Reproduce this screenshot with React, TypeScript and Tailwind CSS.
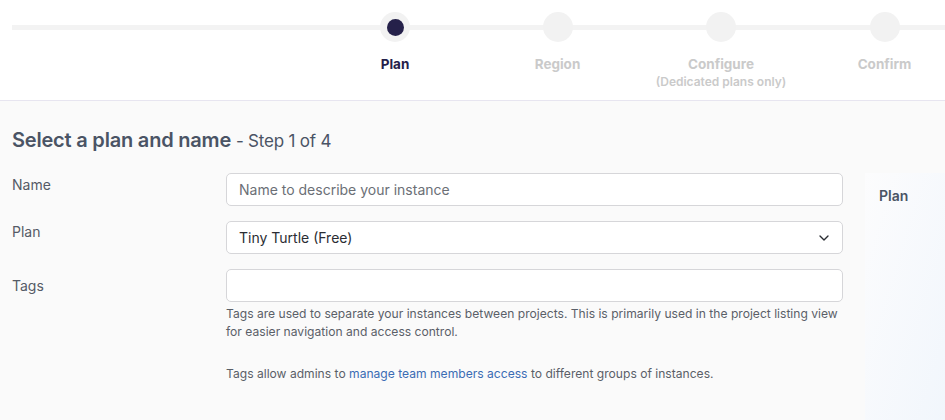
import { ChevronDown } from "lucide-react";

const steps = [
  { label: "Plan", active: true },
  { label: "Region" },
  { label: "Configure", sub: "(Dedicated plans only)" },
  { label: "Confirm" },
];

function Stepper() {
  return (
    <div className="h-[101px] bg-white border-b border-[#e7e5f0] overflow-hidden">
      <div className="relative pl-3 pt-3">
        <div className="absolute left-3 right-0 top-[25px] h-[5px] bg-[#f3f3f3]" />
        <div className="relative grid grid-cols-[302px_162px_163px_164px_163px]">
          <div />
          {steps.map((step) => (
            <div key={step.label} className="flex flex-col items-center">
              <div className="w-[30px] h-[30px] rounded-full bg-[#f2f2f2] flex items-center justify-center">
                {step.active && <div className="w-[17px] h-[17px] rounded-full bg-[#25214a]" />}
              </div>
              <div
                className={`mt-[14px] text-[13.5px] font-bold leading-[16px] ${
                  step.active ? "text-[#25214a]" : "text-[#cacaca]"
                }`}
              >
                {step.label}
              </div>
              {step.sub && (
                <div className="mt-[3px] text-[12px] font-semibold leading-[14px] text-[#cacaca]">{step.sub}</div>
              )}
            </div>
          ))}
        </div>
      </div>
    </div>
  );
}

export default function App() {
  return (
    <div
      className="w-[945px] h-[420px] overflow-hidden bg-[#fafafa]"
      style={{ fontFamily: "Inter, 'Noto Sans', sans-serif" }}
    >
      <Stepper />
      <div className="flex pl-3 pt-[26px]">
        <div className="w-[831px]">
          <h1 className="text-[20px] leading-[26px] font-semibold text-[#4a5465] tracking-[-0.2px]">
            Select a plan and name <span className="text-[17px] font-normal">- Step 1 of 4</span>
          </h1>

          <div className="mt-[19px] grid grid-cols-[214px_617px] gap-y-[15px]">
            <label className="pt-[1px] text-[14px] text-[#555b66]">Name</label>
            <input
              className="h-[33px] rounded-[5px] border border-[#d6d6d9] bg-white px-3 text-[14px] text-[#555] placeholder:text-[#6b6f76] outline-none"
              placeholder="Name to describe your instance"
            />

            <label className="pt-0 text-[14px] text-[#555b66]">Plan</label>
            <div className="h-[33px] rounded-[5px] border border-[#d6d6d9] bg-white px-3 flex items-center justify-between">
              <span className="text-[14px] text-[#2a2d33]">Tiny Turtle (Free)</span>
              <ChevronDown className="w-4 h-4 text-[#2a2d33] mr-[-2px]" strokeWidth={2} />
            </div>

            <label className="pt-[6px] text-[14px] text-[#555b66]">Tags</label>
            <div>
              <input className="w-full h-[33px] rounded-[5px] border border-[#d6d6d9] bg-white px-3 text-[14px] outline-none" />
              <p className="mt-[3px] text-[12.1px] leading-[18px] text-[#5a5f68]">
                Tags are used to separate your instances between projects. This is primarily used in the project
                listing view for easier navigation and access control.
              </p>
              <p className="mt-[24px] text-[12.1px] leading-[18px] text-[#5a5f68]">
                Tags allow admins to <a className="text-[#3a6cb4]">manage team members access</a> to different groups
                of instances.
              </p>
            </div>
          </div>
        </div>
        <div className="ml-[22px] mt-[46px] flex-1 h-[260px] bg-gradient-to-br from-[#fcfcfd] to-[#f1f6fc] pl-[14px] pt-[12px]">
          <div className="text-[14px] font-semibold text-[#4a5465]">Plan</div>
        </div>
      </div>
    </div>
  );
}
